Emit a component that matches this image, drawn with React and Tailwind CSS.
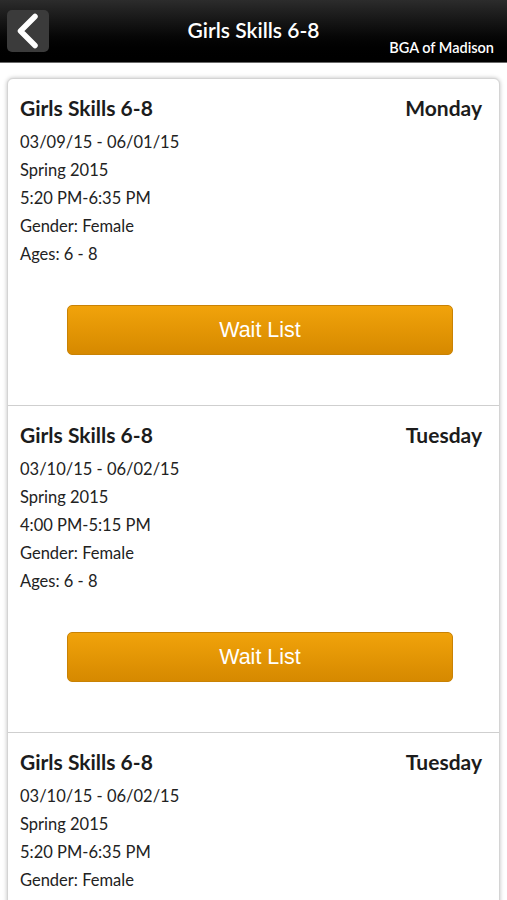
import React from 'react';

const sessions = [
  { title: 'Girls Skills 6-8', day: 'Monday', dates: '03/09/15 - 06/01/15', term: 'Spring 2015', time: '5:20 PM-6:35 PM', gender: 'Female', ages: '6 - 8' },
  { title: 'Girls Skills 6-8', day: 'Tuesday', dates: '03/10/15 - 06/02/15', term: 'Spring 2015', time: '4:00 PM-5:15 PM', gender: 'Female', ages: '6 - 8' },
  { title: 'Girls Skills 6-8', day: 'Tuesday', dates: '03/10/15 - 06/02/15', term: 'Spring 2015', time: '5:20 PM-6:35 PM', gender: 'Female', ages: '6 - 8' },
];

const SessionRow = ({ s }) => (
  <div className="pt-[15px] pl-[12px] pr-[17px] border-b border-[#cfcfcf]">
    <div className="flex justify-between items-center h-[28px] text-[21px] font-bold text-[#1c1c1c]">
      <span>{s.title}</span>
      <span>{s.day}</span>
    </div>
    <div className="mt-[6px] text-[16.5px] leading-[28px] text-[#222]">
      <div>{s.dates}</div>
      <div>{s.term}</div>
      <div>{s.time}</div>
      <div>Gender: {s.gender}</div>
      <div>Ages: {s.ages}</div>
    </div>
    <div className="flex mt-[37px] mb-[50px] pl-[47px]">
      <button className="w-[386px] h-[50px] rounded-[5px] border border-[#c98204] bg-gradient-to-b from-[#f1a30b] to-[#d68900] text-white text-[21.5px] font-['Liberation_Sans',Arial,sans-serif]">
        Wait List
      </button>
    </div>
  </div>
);

export default function App() {
  return (
    <div className="w-[507px] h-[900px] overflow-hidden bg-white font-['Lato','Noto_Sans',sans-serif]">
      <header className="relative h-[63px] bg-gradient-to-b from-[#2c2c2c] via-[#0c0c0c] to-black border-b border-[#6a6a6a] flex items-center justify-center">
        <button className="absolute left-[7px] top-[10px] w-[42px] h-[42px] rounded-[5px] bg-[#3b3b3b] flex items-center justify-center">
          <svg width="26" height="36" viewBox="0 0 26 36" fill="none">
            <path d="M20 3.5 L5.5 18 L20 32.5" stroke="white" strokeWidth="5.5" strokeLinecap="round" strokeLinejoin="round" />
          </svg>
        </button>
        <h1 className="text-white text-[21px] font-semibold -mt-[2px]">Girls Skills 6-8</h1>
        <span className="absolute right-[13px] bottom-[3px] text-white text-[14.5px] font-semibold">BGA of Madison</span>
      </header>
      <main className="pt-[15px] px-[7px]">
        <div className="bg-white rounded-t-[6px] border border-[#d4d4d4] shadow-[0_0_4px_rgba(0,0,0,0.25)]">
          {sessions.map((s, i) => (
            <SessionRow key={i} s={s} />
          ))}
        </div>
      </main>
    </div>
  );
}
